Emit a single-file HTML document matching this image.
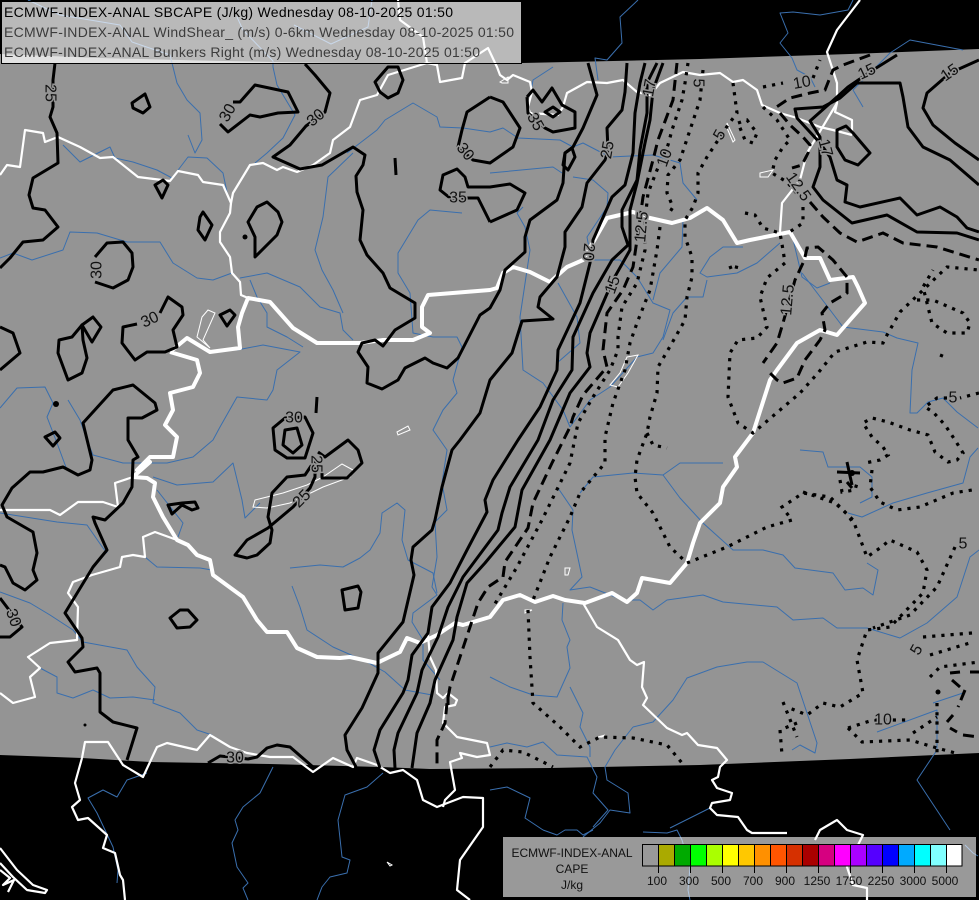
<!DOCTYPE html>
<html><head><meta charset="utf-8"><title>ECMWF-INDEX-ANAL SBCAPE</title>
<style>
html,body{margin:0;padding:0;background:#000;width:979px;height:900px;overflow:hidden}
svg{display:block;position:absolute;left:0;top:0}
text{font-family:"Liberation Sans",sans-serif}
.r polyline{fill:none;stroke:#3a6fae;stroke-width:1;stroke-linejoin:round}
.w polyline{fill:none;stroke:#fff;stroke-width:2.2;stroke-linejoin:round}
.l polygon{fill:none;stroke:#fff;stroke-width:1}
.c polyline,.c polygon{fill:none;stroke:#000;stroke-width:3;stroke-linejoin:round}
.d polyline{fill:none;stroke:#000;stroke-width:3;stroke-dasharray:11 6}
.o polyline{fill:none;stroke:#000;stroke-width:3.2;stroke-dasharray:3.2 6}
.t text{font-size:16px;fill:#111;text-anchor:middle;dominant-baseline:central;stroke:#949494;stroke-width:3;paint-order:stroke}
</style></head><body>
<svg width="979" height="900" viewBox="0 0 979 900" xmlns="http://www.w3.org/2000/svg">
<rect width="979" height="900" fill="#000"/>
<polygon fill="#949494" points="0,54 100,58 200,60.5 300,62.5 400,63.5 522,63 700,59 850,54 979,49 979,753 850,759 700,765 550,768 430,769 380,767 270,764 150,762 82,758 0,755"/>

<g class="r">
<polyline points="28,0 60,15 120,25 132,42 170,55 172,63 177,83 187,100 200,113 202,140 195,153 188,135"/>
<polyline points="237,17 243,30 273,61 273,67 277,85 295,115 283,138 267,153 255,163"/>
<polyline points="294,25 331,44 368,27 372,0"/>
<polyline points="63,145 80,162 90,157 110,147 115,158 133,162 157,170 172,178 188,157 207,158 223,173 228,197"/>
<polyline points="0,258 13,253 32,260 63,250 70,232 97,233 127,242 160,242 173,263 197,278 213,280 232,273"/>
<polyline points="240,278 267,273 300,287 320,307 340,313 343,330 353,340"/>
<polyline points="250,280 257,297 267,313 267,327 287,337 303,347"/>
<polyline points="237,350 263,345 300,352 277,370 273,390 267,400 237,397 220,427 213,440 193,457 167,463 123,463 93,455 87,440 80,420 68,400"/>
<polyline points="347,153 377,130 385,120 413,103 437,117 440,127 463,128 490,132 503,128 518,138 560,140 573,147 583,143 610,157 653,155 680,163 683,183 697,200"/>
<polyline points="353,153 328,177 323,217 315,250 322,270 333,290 343,313"/>
<polyline points="462,213 430,210 418,220 398,253 398,273 410,293 413,333 433,337 457,337 462,347 453,380 457,393 443,410 433,430 447,450 442,483 447,510 435,522 437,557 432,587 437,595 413,613 412,622 423,640 423,660 440,680"/>
<polyline points="0,408 17,388 45,387 53,403 47,417 57,443 67,470"/>
<polyline points="290,568 320,565 343,567 360,558 370,550 380,533 382,513 397,503 405,510 402,540 408,560 433,573 437,593"/>
<polyline points="292,586 300,607 307,630 333,647 367,662 385,672 405,690 432,695"/>
<polyline points="153,477 177,485 213,482 233,463 242,500 245,518 260,503"/>
<polyline points="0,513 57,522 87,525 103,548 107,553"/>
<polyline points="157,490 183,523 178,537"/>
<polyline points="145,557 157,567 200,568 212,570"/>
<polyline points="0,592 30,603 50,615 73,630 83,642 127,650 137,667 155,687 153,703 180,713 197,730 212,735"/>
<polyline points="40,668 57,677 57,693 73,698 93,690 110,698 133,697 155,700"/>
<polyline points="147,773 127,780 117,797 103,790 88,798 97,813 113,847 118,870 117,883"/>
<polyline points="273,767 260,793 243,807 235,820 238,830 232,843 237,867 248,883 243,888 248,900"/>
<polyline points="383,773 367,787 345,795 338,820 342,857 350,860 347,873 330,877 322,887 317,900"/>
<polyline points="638,0 620,17 622,43 607,60 595,58 598,80"/>
<polyline points="853,0 848,10 820,15 793,12 780,13 788,33 780,43 792,58 797,70 810,77 815,87"/>
<polyline points="963,50 910,40 890,53 853,90 863,107"/>
<polyline points="553,67 533,80 530,97"/>
<polyline points="490,173 553,167 562,173"/>
<polyline points="573,177 593,180 608,193 607,207 587,237 590,253 590,260 620,260 637,277 653,303 670,310 663,337 653,353 637,357 610,387 590,400 570,427"/>
<polyline points="523,207 517,213 525,227 530,250 520,317 523,370 543,383 563,410 570,427"/>
<polyline points="558,283 577,317 580,343 557,363"/>
<polyline points="683,220 682,247 660,273 653,300"/>
<polyline points="780,243 757,263 737,273 707,277 700,273 710,257 723,247 743,247"/>
<polyline points="707,280 703,297 687,297 673,313 663,340"/>
<polyline points="792,235 802,277 817,288 830,283"/>
<polyline points="802,273 843,327 883,332 897,338 918,343 912,370 910,413 917,413 928,402 943,398 957,412 978,428"/>
<polyline points="800,450 823,452 828,467 860,467 872,477 872,497 860,503"/>
<polyline points="848,513 862,517 893,503 927,493 963,483 970,457 978,448"/>
<polyline points="490,677 510,687 533,695 557,697 570,668 567,647 570,640 562,620 563,603"/>
<polyline points="490,747 507,743 527,747 543,742 557,755 587,757 597,777 593,793 608,810 593,827"/>
<polyline points="558,488 573,510 572,530 582,577 570,590 590,587 623,600 640,600 653,610 667,600 703,595 723,602 777,607 793,620 823,618 837,628 867,628 900,638 927,623 957,597 970,557 979,550"/>
<polyline points="570,687 583,713 580,727 590,747 590,757"/>
<polyline points="580,493 593,477 633,473 663,475 680,463 723,463"/>
<polyline points="663,475 680,498 703,523 733,550 763,550 783,555 795,568 833,573 845,590 863,588 873,595 878,570 867,563"/>
<polyline points="633,727 653,722 673,700 687,678 717,667 747,662 763,662 797,683 817,743 815,753 800,745 792,750"/>
<polyline points="633,727 615,750 605,767 607,780 628,793 630,813 610,810 600,823 583,837"/>
<polyline points="933,703 963,693"/>
<polyline points="877,732 937,710 937,750 917,780 950,830"/>
<polyline points="490,790 507,787 530,798 525,818 543,830"/>
<polyline points="670,828 710,808"/>
<polyline points="543,830 557,835 565,830 577,830 583,835 593,830"/>
<polyline points="643,832 667,833 677,830 682,840 690,867 688,890 690,900"/>
<polyline points="965,845 973,853 978,856"/>
</g>

<g class="l">
<polygon points="202,317 208,310 215,313 203,340 210,348 197,337"/>
<polygon points="397,432 408,426 410,430 398,435"/>
<polygon points="255,500 283,493 307,485 323,477 342,464 353,470 350,477 323,487 290,503 267,508 253,507"/>
<polygon points="727,123 735,140 733,142 727,128"/>
<polygon points="760,173 773,170 768,177 760,177"/>
<polygon points="627,357 638,355 628,373 618,387 610,385 620,373"/>
<polygon points="500,82 508,77 508,83 502,83"/>
<polygon points="565,568 570,568 568,575 565,575"/>
<polygon points="525,610 532,610 525,613"/>
<polygon points="598,737 605,735 602,737"/>
<polygon points="387,862 392,865 390,866"/>
</g>

<g class="w">
<polyline points="0,175 7,165 20,167 25,130 43,133 45,142 58,137 80,147 100,158 113,157 138,177 170,181 178,171 198,175 203,182 223,185 231,203 230,213 220,232 220,242 230,257 232,273 240,282 241,295 248,298"/>
<polyline points="231,203 233,193 250,165 263,163 277,170 283,167 297,172 313,165 330,153 333,140 350,127 360,100 377,95 388,75 427,63 437,65 440,82 462,78 465,63 488,48 497,67 500,75 507,80 513,75 530,82 532,92 528,107 530,113 558,115 563,107 567,93 587,82 607,83 623,80 637,92 650,95 660,83 683,72 700,75 720,73 733,82 743,80 757,90 762,105 780,113 797,118 820,127 833,130 852,135"/>
<polyline points="427,63 423,37 400,20 398,0"/>
<polyline points="860,0 837,30 827,52 837,83 837,103 835,112 852,120 852,135"/>
<polyline points="837,103 807,153 800,180 782,203 780,232"/>
<polyline points="0,510 50,510 60,515 78,502 103,502 118,507 115,483 133,477"/>
<polyline points="177,540 155,532 143,537 145,557 133,555 122,557 120,567 92,575 73,582 68,593 78,607 77,640 50,643 28,657 40,668 30,677 35,697 13,703 0,693"/>
<polyline points="82,758 85,742 108,742 123,765 143,777 157,747 167,743 197,750 210,735 230,747 247,753 270,757 293,757 313,772 333,758 353,767 357,758 377,765 390,773 403,770 417,780 423,800 437,807 463,797 483,798 483,827 460,860 457,890 470,900"/>
<polyline points="82,758 75,783 80,800 72,807 78,820 88,818 107,835 103,848 115,853 120,875 123,880 125,900"/>
<polyline points="0,848 17,870 33,885 47,890 45,893 27,890 13,877 0,863"/>
<polyline points="0,870 10,878 3,885 14,880 8,892"/>
<polyline points="428,635 430,657 436,670 437,693 443,698 448,693 457,700 455,705 445,707 443,723 457,737 487,743 490,755 477,757 460,753 462,758 450,762 455,790 445,800 443,807"/>
<polyline points="583,603 597,627 618,640 630,660 637,665 644,662 642,687 647,698 643,705 667,728 682,735 687,733 698,745 717,748 727,760 720,767 718,777 712,780 717,788 732,793 730,800 712,803 710,808 717,815 738,817 747,830 752,833 787,833"/>
<polyline points="815,840 820,830 837,820 847,830 863,835 847,867 853,885 867,888 867,900"/>
</g>
<polyline fill="none" stroke="#fff" stroke-width="4" stroke-linejoin="round" points="170,352 197,360 200,373 193,387 170,393 173,410 165,425 177,437 173,457 150,457 137,470 150,462 133,477 147,478 155,483 153,497 163,517 177,540 188,545 197,555 210,560 213,575 243,597 257,620 267,632 287,632 297,648 317,657 340,658 350,657 377,663 400,652 407,638 420,643 437,635 455,623 463,625 490,617 503,600 520,595 535,602 553,596 565,600 585,603 612,593 627,602 637,593 642,578 670,583 687,563 693,543 700,523 720,503 723,487 737,467 735,457 753,433 770,380 777,370 797,343 820,330 837,335 850,320 865,303 858,287 853,277 830,280 820,258 805,258 790,232 750,240 737,243 723,220 707,208 690,218 672,223 650,218 633,212 607,218 583,260 567,267 550,282 530,272 513,267 503,273 497,288 490,290 428,295 422,307 422,327 430,333 413,340 383,340 360,343 317,343 293,328 270,302 248,298 242,313 238,327 240,348 210,352 187,338 170,352"/>

<g class="o">
<polyline points="688,63 685,83 682,100 672,130 668,145 657,170 648,193 645,220 645,250 637,283 622,307 618,337 618,350 610,370 593,397 578,423 570,463 542,520 517,567 493,607"/>
<polyline points="703,70 700,100 690,130 680,160 668,175 667,193 673,207 668,215"/>
<polyline points="660,227 657,250 650,290 637,323 630,343 625,370 613,403 605,437 605,463 580,493 570,517 550,557 537,590 533,600"/>
<polyline points="733,83 737,113 728,125 707,157 698,173 698,193 693,207 685,220 685,237 692,257 692,277 687,297 685,320 672,343 658,367 657,393 650,417 647,433 637,460 635,477 637,493 653,513 670,547 687,563"/>
<polyline points="647,433 653,445 667,448"/>
<polyline points="738,123 747,120 757,133 753,143 745,140 738,123"/>
<polyline points="763,87 783,83"/>
<polyline points="813,78 820,60"/>
<polyline points="763,107 777,120 790,140 783,147 775,160 772,173 787,182 800,197"/>
<polyline points="803,207 803,223 788,233"/>
<polyline points="745,213 755,215 763,228 780,233 783,250 785,263 767,278 760,297 767,327 757,338 738,340 730,353 728,397 738,423 753,433 800,393 818,373 835,352 867,342 883,343 887,335 900,312 920,293 947,267 979,270"/>
<polyline points="729,268 737,265 735,273"/>
<polyline points="528,610 530,657 533,703 560,727 580,747 600,737 633,738 667,745 682,763"/>
<polyline points="490,767 503,750 523,752 553,767"/>
<polyline points="687,563 727,547 767,527 792,520 782,507 803,493 830,497 853,520 867,557 880,548 890,540 917,552 927,570 923,593 890,627 867,630 857,660 863,693 840,707 823,703 807,715 787,707"/>
<polyline points="797,723 780,730 782,755"/>
<polyline points="783,702 797,737"/>
<polyline points="848,728 862,742 910,740 937,748 955,753"/>
<polyline points="848,728 873,720 907,720"/>
<polyline points="913,733 937,717"/>
<polyline points="955,547 937,587 910,615 873,628"/>
<polyline points="923,637 972,633"/>
<polyline points="930,655 973,642"/>
<polyline points="930,677 940,667 979,662"/>
<polyline points="937,703 937,753"/>
<polyline points="917,300 933,300 963,313 970,323 967,333 947,333 932,323 927,303 923,287 933,270"/>
<polyline points="979,393 960,398"/>
<polyline points="947,398 937,398 925,407 933,412 945,425 955,440 963,453 957,460 948,462 935,452 928,435 910,430 888,422 872,418 863,423 872,437 883,447 888,455 880,460 865,463"/>
<polyline points="872,470 870,487 880,502 897,510 920,507 953,493 972,490"/>
<polyline points="803,492 835,503 848,515 853,523"/>
<polyline points="840,480 842,492 855,490 857,483"/>
<polyline points="940,355 945,357"/>
</g>

<g class="c">
<polyline points="55,63 53,80 53,107 50,117 57,133 58,163 33,178 29,195 33,208 45,210 58,227 43,240 23,242 10,258 0,268"/>
<polygon points="132,103 145,94 150,107 143,113 133,108"/>
<polyline points="233,102 240,102 255,85 288,92 298,112 278,113 260,117 250,115 228,132 220,124"/>
<polyline points="305,64 315,75 330,93 325,112 306,126 290,145 273,157 300,169 322,165 353,147 365,155 363,165 356,176 357,192 363,210 360,240 367,255 383,273 390,288 415,303 415,318 395,330 383,346 375,340 362,343 358,352 368,367 367,383 382,389 398,380 405,368 425,358 433,363 447,368 458,358 480,315 490,308 500,290 505,270 525,252 525,237 530,220 557,200 563,183 565,153 573,147 583,128 597,95 588,63"/>
<polyline points="490,97 467,112 462,130 458,147 473,160 490,163 513,147 520,128 503,102 490,97"/>
<polyline points="490,222 478,198 468,198 450,198 440,190 443,175 457,169 465,177 468,187 490,187 510,184 525,193 517,210 490,222"/>
<polyline points="627,63 625,92 622,110 607,128 608,150 605,160 587,183 582,207 565,232 565,247 557,277 540,297 538,307 553,319 522,321 512,353 490,380 480,413 460,440 452,450 442,487 435,520 432,530 413,547 411,560 414,575 403,622 378,653 378,673 362,708 345,735 347,750 356,767"/>
<polyline points="645,63 640,83 635,113 633,153 625,185 612,197 593,240 590,263 580,303 558,350 557,370 540,407 518,440 493,480 485,500 487,512 467,550 450,583 432,607 428,633 412,655 408,680 403,693 380,730 374,750 380,768"/>
<polyline points="657,63 647,83 647,113 640,150 637,180 622,210 622,227 628,245 612,260 593,293 573,337 572,370 553,400 538,440 510,487 502,513 498,530 463,577 448,607 438,637 422,670 417,693 398,733 394,750 395,768"/>
<polyline points="663,63 653,90 650,120 645,143 637,183 630,210 630,250 613,280 590,333 587,353 590,367 570,393 550,440 522,490 515,527 485,563 467,583 457,617 453,640 435,680 430,703 417,733 412,768"/>
<polygon points="572,148 575,157 568,170 563,165 565,153"/>
<polygon points="155,185 163,180 168,185 162,198"/>
<polygon points="203,212 212,225 205,240 198,230 200,217"/>
<polygon points="267,202 278,212 282,222 277,235 255,257 255,237 248,222 257,207"/>
<polyline points="95,257 107,243 123,242 132,253 133,267 128,280 113,288 95,282"/>
<polyline points="160,313 168,297 182,307 183,315 173,330 177,347 165,352 147,352 135,360 122,343 123,327 137,324"/>
<polygon points="220,315 230,310 235,315 227,326"/>
<polygon points="93,317 101,327 92,342 82,325"/>
<polygon points="82,325 83,340 87,358 82,373 68,380 58,353 59,340 72,337"/>
<polyline points="0,327 13,333 20,353 0,370"/>
<polyline points="127,760 137,728 113,722 100,712 100,673 97,668 75,672 68,662 83,647 82,638 65,613 93,567 107,550 95,523 93,517 105,520 123,503 132,487 133,460 138,457 128,440 128,418 142,418 157,410 155,403 133,385 113,390 83,423 92,460 90,470 78,475 63,467 43,472 30,472 12,488 2,505 7,517 33,532 37,553 33,570 37,580 25,590 13,583 5,567 0,565"/>
<polyline points="0,598 22,627 10,637 0,637"/>
<polygon points="45,437 55,432 60,438 53,446"/>
<polygon points="168,505 182,503 195,502 198,508 192,510 182,505 172,514"/>
<polygon points="285,418 273,428 275,450 287,458 305,458 313,433 305,417"/>
<polygon points="285,430 297,428 302,445 293,453 283,445"/>
<polyline points="315,460 305,475 287,477 272,493 268,517 272,530 270,543 257,555 247,558 235,555 247,540 268,528 293,507 310,488 315,477 315,460"/>
<polyline points="318,452 325,457 348,440 358,450 362,463 347,478 322,478 322,472"/>
<polygon points="342,590 358,586 361,592 358,608 345,610"/>
<polygon points="170,618 180,610 188,610 197,620 190,627 177,628"/>
<polyline points="208,763 220,756 248,759 257,757 267,748 277,745 290,747 313,767"/>
<polygon points="375,82 388,67 398,67 403,80 398,93 388,98 380,92"/>
<polyline points="527,97 533,90 542,102 552,88 562,105 575,112 575,128 553,132 545,128 528,113 527,97"/>
<polygon points="545,112 553,107 560,112 553,117"/>
<polyline points="897,55 873,70 848,87 837,97 810,121 820,137 820,167 813,187 823,200 852,223 887,215 917,232 957,233 979,240"/>
<polyline points="979,185 950,160 923,147 908,127 903,97 900,83 857,83 840,98 823,107 795,109 797,118 820,143 830,157 837,180 847,185 845,202 860,207 900,198 917,215 940,207 957,217 967,228 979,232"/>
<polyline points="979,60 950,73 927,93 923,108 933,125 955,143 979,160"/>
<polygon points="837,130 846,126 853,133 870,153 858,165 845,160 837,147"/>
<polyline points="395,158 396,175"/>
<polyline points="317,397 316,413"/>
<polyline points="448,695 448,705"/>
<circle cx="245" cy="237" r="2.5"/>
<circle cx="56" cy="404" r="3"/>
<circle cx="85" cy="725" r="1.5"/>
<circle cx="938" cy="692" r="2.5"/>
<circle cx="852" cy="473" r="3"/>
<polyline points="837,472 860,473"/>
<polyline points="847,482 852,488"/>
<polyline points="847,462 852,485"/>
</g>
<g class="d">
<polyline points="677,63 673,100 658,140 653,160 643,197 638,233 633,267 623,290 607,313 603,350 607,367 583,395 573,417 570,427 552,463 533,503 528,528 505,562 503,577 488,587 478,603 470,627 450,687 447,703 445,723 437,740 437,768"/>
<polyline points="870,55 843,65 833,70 825,90 810,93 790,98 775,108"/>
<polyline points="780,113 790,125 803,137 810,145 808,153 802,165 792,168"/>
<polyline points="810,202 823,217 840,233 857,242 883,233 903,243 937,247 979,260"/>
<polyline points="805,257 807,248 818,247 833,260 847,277 847,293 830,303 822,313 825,330 820,340 805,360 797,378 783,383 777,380 767,370"/>
<polyline points="803,263 795,280 783,323 777,343 763,363"/>
<polyline points="950,673 960,672"/>
<polyline points="970,672 979,672"/>
<polyline points="952,680 960,687"/>
<polyline points="965,690 958,707"/>
<polyline points="953,715 947,722"/>
<polyline points="950,728 957,732"/>
<polyline points="963,735 979,737"/>
</g>
<g class="t">
<text transform="translate(50,93) rotate(90)">25</text>
<text transform="translate(228,113) rotate(-60)">30</text>
<text transform="translate(316,118) rotate(-40)">30</text>
<text transform="translate(465,152) rotate(50)">30</text>
<text transform="translate(458,198)">35</text>
<text transform="translate(535,122) rotate(60)">35</text>
<text transform="translate(608,150) rotate(-80)">25</text>
<text transform="translate(650,88) rotate(-80)">17</text>
<text transform="translate(698,83) rotate(90)">5</text>
<text transform="translate(720,135) rotate(-60)">5</text>
<text transform="translate(665,158) rotate(-70)">10</text>
<text transform="translate(802,83) rotate(-10)">10</text>
<text transform="translate(867,72) rotate(-25)">15</text>
<text transform="translate(950,73) rotate(-35)">15</text>
<text transform="translate(825,148) rotate(75)">17</text>
<text transform="translate(798,187) rotate(55)">12.5</text>
<text transform="translate(642,227) rotate(-85)">12.5</text>
<text transform="translate(588,252) rotate(95)">20</text>
<text transform="translate(613,285) rotate(-70)">15</text>
<text transform="translate(788,300) rotate(-85)">12.5</text>
<text transform="translate(953,398)">5</text>
<text transform="translate(963,544)">5</text>
<text transform="translate(917,650) rotate(-60)">5</text>
<text transform="translate(883,720)">10</text>
<text transform="translate(294,418)">30</text>
<text transform="translate(302,499) rotate(-45)">25</text>
<text transform="translate(316,464) rotate(90)">25</text>
<text transform="translate(97,270) rotate(-90)">30</text>
<text transform="translate(150,320) rotate(-25)">30</text>
<text transform="translate(13,618) rotate(70)">30</text>
<text transform="translate(235,758)">30</text>
</g>

<!-- top legend -->
<rect x="1.5" y="1.5" width="520" height="62" fill="#fff" fill-opacity=".725" stroke="#000" stroke-width="1"/>
<text x="4" y="17" font-size="14" fill="#000" textLength="449" lengthAdjust="spacing">ECMWF-INDEX-ANAL SBCAPE (J/kg) Wednesday 08-10-2025 01:50</text>
<text x="4" y="37" font-size="14" fill="#3c3c3c" textLength="510" lengthAdjust="spacing">ECMWF-INDEX-ANAL WindShear_ (m/s) 0-6km Wednesday 08-10-2025 01:50</text>
<text x="4" y="57" font-size="14" fill="#3c3c3c" textLength="476" lengthAdjust="spacing">ECMWF-INDEX-ANAL Bunkers Right (m/s) Wednesday 08-10-2025 01:50</text>

<!-- bottom legend -->
<rect x="503" y="837" width="473" height="60" fill="#fff" fill-opacity=".6"/>
<g font-size="12" fill="#111" text-anchor="middle">
<text x="572" y="857" textLength="121" lengthAdjust="spacing">ECMWF-INDEX-ANAL</text>
<text x="572" y="873">CAPE</text>
<text x="572" y="889">J/kg</text>
</g>
<g stroke="#000" stroke-width="1">
<rect x="642.5" y="844.5" width="16" height="21.5" fill="#999"/>
<rect x="658.5" y="844.5" width="16" height="21.5" fill="#aaaa00"/>
<rect x="674.5" y="844.5" width="16" height="21.5" fill="#00aa00"/>
<rect x="690.5" y="844.5" width="16" height="21.5" fill="#00ff00"/>
<rect x="706.5" y="844.5" width="16" height="21.5" fill="#aaff00"/>
<rect x="722.5" y="844.5" width="16" height="21.5" fill="#ffff00"/>
<rect x="738.5" y="844.5" width="16" height="21.5" fill="#ffc800"/>
<rect x="754.5" y="844.5" width="16" height="21.5" fill="#ff9000"/>
<rect x="770.5" y="844.5" width="16" height="21.5" fill="#ff5500"/>
<rect x="786.5" y="844.5" width="16" height="21.5" fill="#d63000"/>
<rect x="802.5" y="844.5" width="16" height="21.5" fill="#aa0000"/>
<rect x="818.5" y="844.5" width="16" height="21.5" fill="#d60080"/>
<rect x="834.5" y="844.5" width="16" height="21.5" fill="#ff00ff"/>
<rect x="850.5" y="844.5" width="16" height="21.5" fill="#aa00ff"/>
<rect x="866.5" y="844.5" width="16" height="21.5" fill="#5500ff"/>
<rect x="882.5" y="844.5" width="16" height="21.5" fill="#0000ff"/>
<rect x="898.5" y="844.5" width="16" height="21.5" fill="#00aaff"/>
<rect x="914.5" y="844.5" width="16" height="21.5" fill="#00ffff"/>
<rect x="930.5" y="844.5" width="16" height="21.5" fill="#80ffff"/>
<rect x="946.5" y="844.5" width="15.5" height="21.5" fill="#ffffff"/>
<path d="M658.5 866v7M690.5 866v7M722.5 866v7M754.5 866v7M786.5 866v7M818.5 866v7M850.5 866v7M882.5 866v7M914.5 866v7M946.5 866v7" fill="none"/>
</g>
<g font-size="12" fill="#111" text-anchor="middle">
<text x="657" y="885">100</text>
<text x="689" y="885">300</text>
<text x="721" y="885">500</text>
<text x="753" y="885">700</text>
<text x="785" y="885">900</text>
<text x="817" y="885">1250</text>
<text x="849" y="885">1750</text>
<text x="881" y="885">2250</text>
<text x="913" y="885">3000</text>
<text x="945" y="885">5000</text>
</g>
</svg>
</body></html>
